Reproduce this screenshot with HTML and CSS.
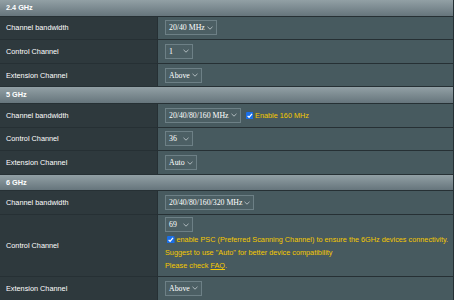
FILE: index.html
```html
<!DOCTYPE html>
<html lang="en">
<head>
<meta charset="utf-8">
<title>Wireless - Channel settings</title>
<link rel="stylesheet" href="styles.css">
</head>
<body>
<div class="form-table">
  <div class="sec-head">2.4 GHz</div>
  <div class="row">
    <div class="label">Channel bandwidth</div>
    <div class="value"><span class="select">20/40 MHz<svg class="chev" viewBox="0 0 6 4"><path d="M0.5 0.8 L3 3.2 L5.5 0.8"/></svg></span></div>
  </div>
  <div class="row">
    <div class="label">Control Channel</div>
    <div class="value"><span class="select">1<svg class="chev" viewBox="0 0 6 4"><path d="M0.5 0.8 L3 3.2 L5.5 0.8"/></svg></span></div>
  </div>
  <div class="row">
    <div class="label">Extension Channel</div>
    <div class="value"><span class="select">Above<svg class="chev" viewBox="0 0 6 4"><path d="M0.5 0.8 L3 3.2 L5.5 0.8"/></svg></span></div>
  </div>

  <div class="sec-head">5 GHz</div>
  <div class="row">
    <div class="label">Channel bandwidth</div>
    <div class="value">
      <span class="select">20/40/80/160 MHz<svg class="chev" viewBox="0 0 6 4"><path d="M0.5 0.8 L3 3.2 L5.5 0.8"/></svg></span>
      <span class="check"><svg viewBox="0 0 8 8"><rect x="0" y="0" width="8" height="8" rx="1.2" fill="#1a6fe8"/><path d="M1.7 4.1 L3.3 5.8 L6.4 2" fill="none" stroke="#fff" stroke-width="1.3"/></svg></span>
      <span class="hint">Enable 160 MHz</span>
    </div>
  </div>
  <div class="row">
    <div class="label">Control Channel</div>
    <div class="value"><span class="select">36<svg class="chev" viewBox="0 0 6 4"><path d="M0.5 0.8 L3 3.2 L5.5 0.8"/></svg></span></div>
  </div>
  <div class="row">
    <div class="label">Extension Channel</div>
    <div class="value"><span class="select">Auto<svg class="chev" viewBox="0 0 6 4"><path d="M0.5 0.8 L3 3.2 L5.5 0.8"/></svg></span></div>
  </div>

  <div class="sec-head">6 GHz</div>
  <div class="row">
    <div class="label">Channel bandwidth</div>
    <div class="value"><span class="select">20/40/80/160/320 MHz<svg class="chev" viewBox="0 0 6 4"><path d="M0.5 0.8 L3 3.2 L5.5 0.8"/></svg></span></div>
  </div>
  <div class="row row-tall">
    <div class="label">Control Channel</div>
    <div class="value value-stack">
      <span class="select">69<svg class="chev" viewBox="0 0 6 4"><path d="M0.5 0.8 L3 3.2 L5.5 0.8"/></svg></span>
      <div class="line psc"><span class="check"><svg viewBox="0 0 8 8"><rect x="0" y="0" width="8" height="8" rx="1.2" fill="#1a6fe8"/><path d="M1.7 4.1 L3.3 5.8 L6.4 2" fill="none" stroke="#fff" stroke-width="1.3"/></svg></span><span class="hint">enable PSC (Preferred Scanning Channel) to ensure the 6GHz devices connectivity.</span></div>
      <div class="line hint">Suggest to use "Auto" for better device compatibility</div>
      <div class="line hint">Please check <a class="faq" href="#">FAQ</a>.</div>
    </div>
  </div>
  <div class="row">
    <div class="label">Extension Channel</div>
    <div class="value"><span class="select">Above<svg class="chev" viewBox="0 0 6 4"><path d="M0.5 0.8 L3 3.2 L5.5 0.8"/></svg></span></div>
  </div>
</div>
</body>
</html>
```

FILE: styles.css
```css
html, body {
  margin: 0;
  padding: 0;
  background: #475a5f;
}

body {
  width: 454px;
  height: 300px;
  overflow: hidden;
  font-family: "Liberation Sans", Arial, sans-serif;
  font-size: 7.3px;
  color: #ffffff;
}

.form-table {
  border-right: 1px solid #253034;
}

.sec-head {
  height: 15.5px;
  line-height: 15.5px;
  padding-left: 6px;
  font-weight: bold;
  background: linear-gradient(#92a0a5, #66757c);
  border-bottom: 1px solid #263034;
}

.row {
  display: flex;
  min-height: 22.67px;
  border-bottom: 1px solid #263034;
}

.row-tall {
  min-height: 61px;
}

.label {
  width: 158px;
  flex: none;
  box-sizing: border-box;
  padding-left: 6px;
  background: #2e393d;
  border-right: 1px solid #263034;
  display: flex;
  align-items: center;
}

.value {
  flex: 1;
  padding-left: 7px;
  display: flex;
  align-items: center;
  background: #475a5f;
}

.value-stack {
  flex-direction: column;
  align-items: flex-start;
  justify-content: flex-start;
  padding-top: 2px;
}

.select {
  display: inline-flex;
  align-items: center;
  justify-content: space-between;
  gap: 2px;
  box-sizing: border-box;
  height: 15px;
  min-width: 28px;
  padding: 0 3px 0 3px;
  border: 1px solid #6d8086;
  background: #4c5f64;
  font-family: "Liberation Serif", "Times New Roman", serif;
  font-size: 7.8px;
  color: #ffffff;
  white-space: nowrap;
}

.chev {
  width: 6px;
  height: 4px;
  flex: none;
  fill: none;
  stroke: #c9d1d4;
  stroke-width: 0.8;
}

.check {
  display: inline-flex;
  width: 7.5px;
  height: 7.5px;
  margin-left: 5px;
  margin-right: 2px;
}

.check svg {
  width: 7.5px;
  height: 7.5px;
}

.hint {
  color: #f5c900;
}

.line {
  height: 13px;
  line-height: 13px;
  white-space: nowrap;
}

.psc {
  display: flex;
  align-items: center;
  margin-top: 1px;
}

.psc .check {
  margin-left: 2px;
  margin-right: 2px;
}

.faq {
  color: #f5c900;
  text-decoration: underline;
}
```
